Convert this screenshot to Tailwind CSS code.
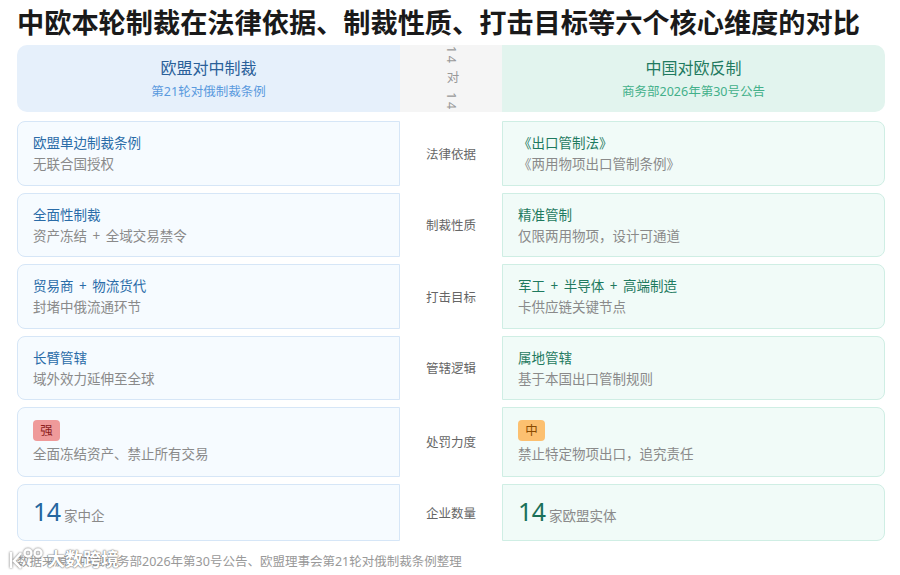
<!DOCTYPE html>
<html lang="zh-CN">
  <head>
    <meta charset="utf-8" />
    <title>中欧制裁对比</title>
    <script src="https://cdn.jsdelivr.net/npm/@tailwindcss/browser@4"></script>
  </head>
  <body class="bg-white w-[900px] h-[575px] overflow-hidden relative font-['Noto_Sans','Noto_Sans_CJK_SC',sans-serif]">
    <div class="pl-[17px] pr-[15px]">
      <h1 class="h-[45px] text-[27.2px] leading-[45px] font-bold text-[#1a1a1a] whitespace-nowrap">中欧本轮制裁在法律依据、制裁性质、打击目标等六个核心维度的对比</h1>

      <!-- Column headers -->
      <div class="grid grid-cols-[383px_102px_383px] h-[67px]">
        <div class="bg-[#e6f0fb] rounded-l-[10px] flex flex-col items-center justify-center">
          <div class="text-[16px] leading-[24px] text-[#2a6099] mb-[2px]">欧盟对中制裁</div>
          <div class="text-[12.5px] leading-[20px] text-[#5a9ade]">第21轮对俄制裁条例</div>
        </div>
        <div class="bg-[#f5f5f5] overflow-hidden flex justify-center items-center">
          <div class="[writing-mode:vertical-rl] text-[12.5px] tracking-[2.6px] text-[#999999] whitespace-nowrap">14 对 14</div>
        </div>
        <div class="bg-[#e2f4ee] rounded-r-[10px] flex flex-col items-center justify-center">
          <div class="text-[16px] leading-[24px] text-[#1f7a5f] mb-[2px]">中国对欧反制</div>
          <div class="text-[12.5px] leading-[20px] text-[#43b08a]">商务部2026年第30号公告</div>
        </div>
      </div>

      <!-- Comparison rows -->
      <div class="grid grid-cols-[383px_102px_383px] grid-rows-[64.5px_64.5px_64.5px_64.5px_69.5px_57px] gap-y-[7px] mt-[9px] text-[13.5px] leading-[21px] [word-spacing:2px]">
        <div class="bg-[#f6fbff] border border-[#d6e6f7] rounded-l-[8px] pl-[15px] pt-[2px] flex flex-col justify-center">
          <div class="text-[#2a6ca8]">欧盟单边制裁条例</div>
          <div class="text-[#8a8a8a]">无联合国授权</div>
        </div>
        <div class="flex items-center justify-center pt-[2px] text-[12.5px] text-[#666666]">法律依据</div>
        <div class="bg-[#f1fbf8] border border-[#cfeee4] rounded-r-[8px] pl-[15px] pt-[2px] flex flex-col justify-center">
          <div class="text-[#1f7a5f]">《出口管制法》</div>
          <div class="text-[#8a8a8a]">《两用物项出口管制条例》</div>
        </div>

        <div class="bg-[#f6fbff] border border-[#d6e6f7] rounded-l-[8px] pl-[15px] pt-[2px] flex flex-col justify-center">
          <div class="text-[#2a6ca8]">全面性制裁</div>
          <div class="text-[#8a8a8a]">资产冻结 + 全域交易禁令</div>
        </div>
        <div class="flex items-center justify-center pt-[2px] text-[12.5px] text-[#666666]">制裁性质</div>
        <div class="bg-[#f1fbf8] border border-[#cfeee4] rounded-r-[8px] pl-[15px] pt-[2px] flex flex-col justify-center">
          <div class="text-[#1f7a5f]">精准管制</div>
          <div class="text-[#8a8a8a]">仅限两用物项，设计可通道</div>
        </div>

        <div class="bg-[#f6fbff] border border-[#d6e6f7] rounded-l-[8px] pl-[15px] pt-[2px] flex flex-col justify-center">
          <div class="text-[#2a6ca8]">贸易商 + 物流货代</div>
          <div class="text-[#8a8a8a]">封堵中俄流通环节</div>
        </div>
        <div class="flex items-center justify-center pt-[2px] text-[12.5px] text-[#666666]">打击目标</div>
        <div class="bg-[#f1fbf8] border border-[#cfeee4] rounded-r-[8px] pl-[15px] pt-[2px] flex flex-col justify-center">
          <div class="text-[#1f7a5f]">军工 + 半导体 + 高端制造</div>
          <div class="text-[#8a8a8a]">卡供应链关键节点</div>
        </div>

        <div class="bg-[#f6fbff] border border-[#d6e6f7] rounded-l-[8px] pl-[15px] pt-[2px] flex flex-col justify-center">
          <div class="text-[#2a6ca8]">长臂管辖</div>
          <div class="text-[#8a8a8a]">域外效力延伸至全球</div>
        </div>
        <div class="flex items-center justify-center pt-[2px] text-[12.5px] text-[#666666]">管辖逻辑</div>
        <div class="bg-[#f1fbf8] border border-[#cfeee4] rounded-r-[8px] pl-[15px] pt-[2px] flex flex-col justify-center">
          <div class="text-[#1f7a5f]">属地管辖</div>
          <div class="text-[#8a8a8a]">基于本国出口管制规则</div>
        </div>

        <div class="bg-[#f6fbff] border border-[#d6e6f7] rounded-l-[8px] pl-[15px] pt-[2px] flex flex-col justify-center items-start">
          <span class="bg-[#ef9a9a] text-[#8c1d1d] text-[12.5px] leading-[21px] rounded-[4px] w-[27px] text-center mb-[3px]">强</span>
          <div class="text-[#8a8a8a]">全面冻结资产、禁止所有交易</div>
        </div>
        <div class="flex items-center justify-center pt-[2px] text-[12.5px] text-[#666666]">处罚力度</div>
        <div class="bg-[#f1fbf8] border border-[#cfeee4] rounded-r-[8px] pl-[15px] pt-[2px] flex flex-col justify-center items-start">
          <span class="bg-[#fcc070] text-[#8a4a00] text-[12.5px] leading-[21px] rounded-[4px] w-[27px] text-center mb-[3px]">中</span>
          <div class="text-[#8a8a8a]">禁止特定物项出口，追究责任</div>
        </div>

        <div class="bg-[#f6fbff] border border-[#d6e6f7] rounded-l-[8px] pl-[15px] pt-[2px] flex items-center">
          <span class="text-[25px] tracking-[-0.5px] text-[#24669f] mr-[3.5px] mb-[3px]">14</span><span class="text-[#8a8a8a] mt-[6px]">家中企</span>
        </div>
        <div class="flex items-center justify-center pt-[2px] text-[12.5px] text-[#666666]">企业数量</div>
        <div class="bg-[#f1fbf8] border border-[#cfeee4] rounded-r-[8px] pl-[15px] pt-[2px] flex items-center">
          <span class="text-[25px] tracking-[-0.5px] text-[#1a7059] mr-[3.5px] mb-[3px]">14</span><span class="text-[#8a8a8a] mt-[6px]">家欧盟实体</span>
        </div>
      </div>

      <p class="mt-[12px] text-[12.5px] leading-[18px] text-[#999999] whitespace-nowrap">数据来源：中国商务部2026年第30号公告、欧盟理事会第21轮对俄制裁条例整理</p>
    </div>

    <!-- Video platform watermark -->
    <div class="absolute left-[8px] top-[547px] flex items-center gap-[1px] text-white font-bold text-[18px] leading-[24px] [text-shadow:0_0_2px_#666666,0_0_1px_#666666]">
      <svg width="38" height="24" viewBox="0 0 38 24" fill="none" stroke="#ffffff" stroke-width="2.5" class="drop-shadow-[0_0_1px_#666666]">
        <path d="M3 5v16M13 6l-7 8 7 7" />
        <circle cx="20" cy="6" r="3.5" /><circle cx="30" cy="6" r="3.5" />
      </svg>
      <span>大数跨境</span>
    </div>
  </body>
</html>
